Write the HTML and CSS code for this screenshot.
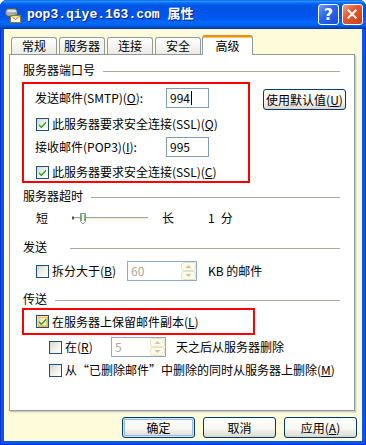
FILE: index.html
```html
<!DOCTYPE html>
<html lang="zh-CN">
<head>
  <meta charset="utf-8">
  <title>pop3.qiye.163.com 属性</title>
  <link rel="stylesheet" href="styles.css">
</head>
<body>
 <div class="window">
  <div class="titlebar">
   <svg class="appicon" viewBox="0 0 16 16">
    <rect x="0.5" y="1.5" width="12" height="8" rx="3.5" fill="#a7aeb6" stroke="#4d5561"/>
    <rect x="2" y="3" width="9" height="2" rx="1" fill="#dfe3e7"/>
    <circle cx="10" cy="7" r="1" fill="#3fcf3f"/>
    <rect x="5.5" y="8.5" width="10" height="7" fill="#fffbe2" stroke="#8b7b3c"/>
    <path d="M5.5 8.5 L10.5 12.5 L15.5 8.5" fill="none" stroke="#8b7b3c"/>
    <path d="M6 10 h9" stroke="#f0c850"/>
   </svg>
   <span class="title">pop3.qiye.163.com 属性</span>
   <span class="capbtn help">?</span>
   <span class="capbtn close">
    <svg viewBox="0 0 21 21" width="19" height="19"><path d="M6 6 L14 14 M14 6 L6 14" stroke="#fff" stroke-width="2.2" stroke-linecap="square"/></svg>
   </span>
  </div>

  <div class="client">
   <div class="tabs">
    <span class="tab">常规</span>
    <span class="tab">服务器</span>
    <span class="tab">连接</span>
    <span class="tab">安全</span>
    <span class="tab active">高级</span>
   </div>

   <div class="panel">
    <div class="glabel">服务器端口号</div>
    <div class="ports">
     <div class="hl hl-ports">
      <div class="field f1">
       <span class="lbl">发送邮件(SMTP)(<u>O</u>):</span>
       <span class="tb tb-port">994<span class="caret"></span></span>
      </div>
      <div class="chk c1">
       <span class="cb"><svg viewBox="0 0 11 11"><path d="M2 5 L4.3 7.3 L9 2.6 L9 4.6 L4.3 9.3 L2 7 Z" fill="#21a121"/></svg></span>
       <span>此服务器要求安全连接(SSL)(<u>Q</u>)</span>
      </div>
      <div class="field f2">
       <span class="lbl">接收邮件(POP3)(<u>I</u>):</span>
       <span class="tb tb-port">995</span>
      </div>
      <div class="chk c2">
       <span class="cb"><svg viewBox="0 0 11 11"><path d="M2 5 L4.3 7.3 L9 2.6 L9 4.6 L4.3 9.3 L2 7 Z" fill="#21a121"/></svg></span>
       <span>此服务器要求安全连接(SSL)(<u>C</u>)</span>
      </div>
     </div>
     <span class="btn btn-reset">使用默认值(<u>U</u>)</span>
    </div>

    <div class="glabel g2">服务器超时</div>
    <div class="slider-row">
     <span>短</span>
     <svg class="slider" viewBox="0 0 76 16">
      <path d="M0 7.5 H76" stroke="#a3a3a3"/>
      <path d="M0 8.5 H76" stroke="#f4f2c6"/>
      <path d="M0 6.5 H2 V9.5 H0" fill="#555"/>
      <path d="M8.5 3.5 H13.5 V11.5 L11 14 L8.5 11.5 Z" fill="#fff" stroke="#7f9a7f"/>
      <path d="M9.5 4.5 V11 M12.5 4.5 V11" stroke="#5fbf5f"/>
     </svg>
     <span class="long">长</span>
     <span class="num">1</span>
     <span class="unit">分</span>
    </div>

    <div class="glabel g3 wide">发送</div>
    <div class="split">
     <span class="cb"></span>
     <span class="lbl">拆分大于(<u>B</u>)</span>
     <span class="tb tb-dis tb-split">60
      <svg class="spin" viewBox="0 0 15 18">
       <rect x="0.5" y="0.5" width="14" height="8" rx="2" fill="#fbfae6" stroke="#e6e3c8"/>
       <rect x="0.5" y="9.5" width="14" height="8" rx="2" fill="#fbfae6" stroke="#e6e3c8"/>
       <path d="M4.5 6 L7.5 3 L10.5 6 Z" fill="#c9c6b4"/>
       <path d="M4.5 12 L7.5 15 L10.5 12 Z" fill="#c9c6b4"/>
      </svg>
     </span>
     <span class="after">KB 的邮件</span>
    </div>

    <div class="glabel g4">传送</div>
    <div class="hl hl-keep">
     <span class="cb hot"><svg viewBox="0 0 11 11"><path d="M2 5 L4.3 7.3 L9 2.6 L9 4.6 L4.3 9.3 L2 7 Z" fill="#21a121"/></svg></span>
     <span>在服务器上保留邮件副本(<u>L</u>)</span>
    </div>
    <div class="days">
     <span class="cb"></span>
     <span class="lbl">在(<u>R</u>)</span>
     <span class="tb tb-dis tb-days">5
      <svg class="spin" viewBox="0 0 15 18">
       <rect x="0.5" y="0.5" width="14" height="8" rx="2" fill="#fbfae6" stroke="#e6e3c8"/>
       <rect x="0.5" y="9.5" width="14" height="8" rx="2" fill="#fbfae6" stroke="#e6e3c8"/>
       <path d="M4.5 6 L7.5 3 L10.5 6 Z" fill="#c9c6b4"/>
       <path d="M4.5 12 L7.5 15 L10.5 12 Z" fill="#c9c6b4"/>
      </svg>
     </span>
     <span class="after2">天之后从服务器删除</span>
    </div>
    <div class="chk c3">
     <span class="cb"></span>
     <span>从“已删除邮件”中删除的同时从服务器上删除(<u>M</u>)</span>
    </div>
   </div>

   <div class="actions">
    <span class="btn btn-default">确定</span>
    <span class="btn">取消</span>
    <span class="btn">应用(<u>A</u>)</span>
   </div>
  </div>
 </div>
</body>
</html>
```

FILE: styles.css
```css
*,*:before,*:after{box-sizing:border-box;}
html,body{margin:0;padding:0;}
body{
 width:366px;
 height:445px;
 overflow:hidden;
 background:#fff;
 font:12px/16px "Noto Sans CJK SC","Noto Sans",sans-serif;
 color:#000;
}
u{text-decoration:underline;text-underline-offset:1px;}

/* window frame */
.window{
 width:366px;
 height:445px;
 display:flex;
 flex-direction:column;
 background:#0a55e6;
 border-radius:7px 7px 0 0;
 overflow:hidden;
 box-shadow:inset 1px 0 #0831d9,inset -1px 0 #0831d9,inset 0 -1px #0831d9;
}
.titlebar{
 height:29px;
 flex:none;
 display:flex;
 align-items:center;
 padding:0 3px 0 5px;
 background:linear-gradient(#0058ee 0%,#3593ff 4%,#288eff 6%,#127dff 8%,#036ffc 10%,#0262ee 14%,#0057e5 20%,#0054e3 24%,#0055eb 56%,#005bf5 66%,#026afe 76%,#0062ef 86%,#0052d6 92%,#0040ab 97%,#003092 100%);
}
.appicon{width:16px;height:16px;margin-right:6px;flex:none;}
.title{
 flex:1;
 color:#fff;
 font:bold 13px/16px "Liberation Mono","Noto Sans CJK SC",monospace;
 text-shadow:1px 1px 0 #0a1e80;
 white-space:nowrap;
}
.capbtn{
 width:21px;
 height:21px;
 flex:none;
 border:1px solid #fff;
 border-radius:3px;
 display:flex;
 align-items:center;
 justify-content:center;
}
.help{
 margin-right:3px;
 background:linear-gradient(135deg,#6f9cf8 0%,#2a63e8 45%,#1a4fd8 100%);
 color:#fff;
 font:bold 16px/1 "DejaVu Sans",sans-serif;
}
.close{
 background:linear-gradient(135deg,#f0a184 0%,#e3582f 40%,#c8401c 100%);
}

/* client area */
.client{
 flex:1;
 margin:0 4px 4px;
 background:#fdfbda;
 padding:6px 7px 0 5px;
 display:flex;
 flex-direction:column;
}
.tabs{
 height:19px;
 display:flex;
 align-items:flex-end;
 padding-left:2px;
 position:relative;
 z-index:1;
}
.tab{
 width:46px;
 height:17px;
 margin-right:2px;
 border:1px solid #919b9c;
 border-bottom:none;
 border-radius:3px 3px 0 0;
 background:linear-gradient(#fff,#ecebe6);
 text-align:center;
 line-height:16px;
}
.tab.active{
 width:51px;
 height:20px;
 margin:0 0 -1px -1px;
 background:#fff;
 border-top:2px solid #e68b2c;
 box-shadow:inset 0 1px #ffc83c;
 line-height:18px;
}
.panel{
 height:357px;
 flex:none;
 background:#fff;
 border:1px solid #919b9c;
 box-shadow:1px 1px 0 #d0cec0,2px 2px 0 #e6e4d4;
 padding:7px 8px 0 13px;
 display:flex;
 flex-direction:column;
}

/* group labels */
.glabel{display:flex;align-items:center;height:16px;}
.glabel:after{
 content:"";
 flex:1;
 border-top:1px solid #a9a89f;
 margin:2px 6px 0 8px;
}
.glabel.wide:after{margin-left:23px;}
.g2{margin-top:5px;}
.g3{margin-top:13px;}
.g4{margin-top:10px;}

.hl{border:2px solid #f00;}

/* ports */
.ports{display:flex;align-items:flex-start;margin-top:4px;}
.hl-ports{
 width:228px;
 height:101px;
 flex:none;
 margin-left:-1px;
 padding-left:11px;
}
.field{display:flex;align-items:center;height:20px;}
.field .lbl{width:131px;}
.f1{margin-top:4px;}
.f2{margin-top:5px;}
.chk{display:flex;align-items:center;height:16px;}
.c1{margin-top:8px;padding-left:1px;}
.c2{margin-top:7px;padding-left:1px;}
.c3{margin-top:5px;padding-left:26px;}

.tb{
 height:20px;
 flex:none;
 display:flex;
 align-items:center;
 border:1px solid #7f9db9;
 background:#fff;
 padding:0 3px;
}
.tb-port{width:43px;}
.caret{width:1px;height:14px;background:#000;margin-left:1px;}
.tb-dis{color:#aca899;border-color:#8fa9c6;padding-right:0;}
.tb-split{width:70px;}
.tb-days{width:55px;}
.spin{width:15px;height:18px;margin-left:auto;}

/* checkbox */
.cb{
 width:13px;
 height:13px;
 flex:none;
 margin-right:3px;
 display:flex;
 border:1px solid #1c5180;
 background:linear-gradient(135deg,#d6d5cc 0%,#f2f1ea 55%,#fff 100%);
}
.cb svg{width:11px;height:11px;}
.cb.hot{box-shadow:inset 1px 1px 0 #fee29e,inset -1px -1px 0 #f8b33a,inset 0 0 0 2px #fac552;}

/* buttons */
.btn{
 width:73px;
 height:21px;
 flex:none;
 border:1px solid #003c74;
 border-radius:3px;
 background:linear-gradient(#fff 0%,#f7f6f1 55%,#e3e0d6 90%,#d6d0c5 100%);
 text-align:center;
 line-height:19px;
}
.btn-reset{width:83px;margin:7px 0 0 13px;}
.btn-default{box-shadow:inset 0 0 0 1px #cee7ff,inset 0 0 0 2px #98b8ea;}
.actions{
 display:flex;
 justify-content:flex-end;
 gap:8px;
 margin:6px -2px 0 0;
}

/* timeout */
.slider-row{display:flex;align-items:center;height:16px;margin-top:6px;padding-left:13px;}
.slider{width:76px;height:16px;margin-left:24px;flex:none;}
.long{margin-left:14px;}
.num{margin-left:34px;}
.unit{margin-left:6px;}

/* send */
.split{display:flex;align-items:center;height:20px;margin-top:6px;padding-left:13px;}
.split .lbl{width:75px;}
.after{margin-left:11px;}

/* delivery */
.hl-keep{
 width:233px;
 height:27px;
 margin:1px 0 0 -1px;
 display:flex;
 align-items:center;
 padding-left:12px;
}
.days{display:flex;align-items:center;height:20px;margin-top:2px;padding-left:26px;}
.days .lbl{width:46px;}
.after2{margin-left:10px;}
```
